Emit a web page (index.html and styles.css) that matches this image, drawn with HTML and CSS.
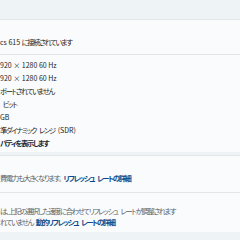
FILE: index.html
```html
<!DOCTYPE html>
<html lang="ja">
<head>
    <meta charset="UTF-8">
    <meta name="viewport" content="width=device-width, initial-scale=1.0">
    <title>ディスプレイの詳細設定</title>
    <link rel="stylesheet" href="styles.css">
</head>
<body>
    <div class="top"></div>

    <div class="card head">
        <p class="line"><span class="lat">cs 615 </span>に接続されています</p>
    </div>

    <div class="card info">
        <p class="line lat">920 × 1280 60 Hz</p>
        <p class="line lat">920 × 1280 60 Hz</p>
        <p class="line">ポートされていません</p>
        <p class="line">&nbsp;ビット</p>
        <p class="line lat">GB</p>
        <p class="line">準ダイナミック レンジ <span class="lat">(SDR)</span></p>
        <p class="line link-bold">パティを表示します</p>
    </div>

    <div class="card rate">
        <p class="line muted">費電力も大きくなります。 <a class="link" href="#">リフレッシュ レートの詳細</a></p>
    </div>

    <div class="card dynamic">
        <p class="line muted">は、上記の選択した速度に合わせてリフレッシュ レートが調整されます</p>
        <p class="line muted">れていません <a class="link" href="#">動的リフレッシュ レートの詳細</a></p>
    </div>
</body>
</html>
```

FILE: styles.css
```css
body {
    margin: 0;
    background-color: #eef3f5;
    font-family: "Noto Sans CJK JP", "Noto Sans", sans-serif;
    font-size: 7.3px;
    font-feature-settings: "palt";
    color: #1b1b1b;
    overflow: hidden;
}
.top {
    height: 19px;
}
.card {
    background: #f9fbfc;
    border-top: 1px solid #e1e6e9;
}
.line {
    margin: 0;
    height: 13px;
    line-height: 13px;
    white-space: nowrap;
    letter-spacing: -1.35px;
    word-spacing: 2.5px;
}
.lat {
    font-size: 7px;
    letter-spacing: 0;
    word-spacing: 0;
}
.head {
    height: 35px;
    padding-top: 16px;
    box-sizing: border-box;
}
.info {
    padding: 4px 0 2px;
    margin-bottom: 3px;
}
.link-bold {
    font-weight: bold;
    color: #1a2a3a;
}
.rate {
    height: 37px;
    padding-top: 16px;
    box-sizing: border-box;
}
.dynamic {
    height: 40px;
    padding-top: 13px;
    box-sizing: border-box;
}
.dynamic .line {
    height: 11px;
    line-height: 11px;
}
.muted {
    color: #5c5f62;
}
.link {
    color: #0b4a8a;
    font-weight: bold;
    text-decoration: none;
}
```
